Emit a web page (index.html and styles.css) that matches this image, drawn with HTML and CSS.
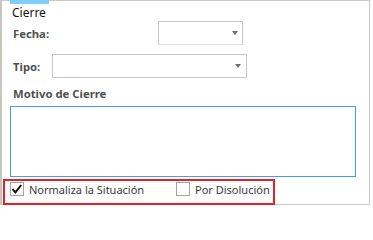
FILE: index.html
```html
<!DOCTYPE html>
<html lang="es">
<head>
<meta charset="utf-8">
<title>Cierre</title>
<link rel="stylesheet" href="styles.css">
</head>
<body>
<div class="panel">
  <div class="tab-indicator"></div>
  <div class="title">Cierre</div>
  <div class="row row-fecha">
    <span class="label label-fecha">Fecha:</span>
    <div class="combo combo-fecha"><span class="arrow"></span></div>
  </div>
  <div class="row row-tipo">
    <span class="label label-tipo">Tipo:</span>
    <div class="combo combo-tipo"><span class="arrow"></span></div>
  </div>
  <div class="label label-motivo">Motivo de Cierre</div>
  <div class="textarea"></div>
  <div class="checks">
    <div class="check-item check-item-first">
      <span class="check checked">
        <svg viewBox="0 0 14 14" width="14" height="14"><path d="M2.6 7.2 L5.4 10.4 L11.2 3" fill="none" stroke="#111" stroke-width="2"/></svg>
      </span>
      <span class="check-text">Normaliza la Situación</span>
    </div>
    <div class="check-item">
      <span class="check"></span>
      <span class="check-text">Por Disolución</span>
    </div>
  </div>
</div>
</body>
</html>
```
FILE: styles.css
```css
html, body {
  margin: 0;
  padding: 0;
  background: #ffffff;
}
body {
  font-family: "Noto Sans", "Open Sans", sans-serif;
}
.panel {
  position: relative;
  box-sizing: border-box;
  width: 370px;
  height: 205px;
  border: 1px solid #cbcbc3;
  border-left: 2px solid #c6c6bd;
  background: #ffffff;
}
.tab-indicator {
  position: absolute;
  left: 8px;
  top: -1px;
  width: 39px;
  height: 4px;
  background: #7fcffb;
}
.title {
  margin: 3px 0 0 10px;
  height: 17px;
  line-height: 18px;
  font-size: 12px;
  color: #111111;
}
.row {
  display: flex;
  align-items: center;
  height: 24px;
  padding-left: 11px;
}
.row-tipo {
  margin-top: 9px;
}
.label {
  font-size: 11.3px;
  font-weight: bold;
  color: #505050;
}
.label-fecha {
  width: 145px;
}
.label-tipo {
  width: 39px;
}
.combo {
  position: relative;
  box-sizing: border-box;
  height: 24px;
  border: 1px solid #c6c6c6;
  background: #ffffff;
}
.combo-fecha {
  width: 85px;
  border-bottom-color: #dedede;
}
.combo-tipo {
  width: 195px;
}
.arrow {
  position: absolute;
  right: 5px;
  top: 9px;
  width: 0;
  height: 0;
  border-left: 3.5px solid transparent;
  border-right: 3.5px solid transparent;
  border-top: 4px solid #6e6e6e;
}
.combo-fecha .arrow {
  right: 4px;
}
.label-motivo {
  margin: 8px 0 0 11px;
  line-height: 15px;
  height: 15px;
}
.textarea {
  box-sizing: border-box;
  margin: 5px 0 0 8px;
  width: 346px;
  height: 71px;
  border: 1px solid #3c9ef5;
}
.checks {
  position: relative;
  box-sizing: border-box;
  display: flex;
  align-items: center;
  width: 272px;
  height: 26px;
  margin: 2px 0 0 1px;
  padding: 1px 0 7px 5px;
  border: 2px solid #e8202a;
  font-size: 11px;
  color: #3a3a3a;
}
.check-item {
  display: flex;
  align-items: center;
}
.check-item-first {
  width: 166px;
}
.check {
  box-sizing: border-box;
  display: block;
  flex: none;
  width: 14px;
  height: 14px;
  border: 1px solid #a3a3a3;
  background: #ffffff;
  position: relative;
}
.check svg {
  position: absolute;
  left: -1px;
  top: -1px;
}
.check-text {
  margin-left: 5px;
  white-space: nowrap;
}
```
